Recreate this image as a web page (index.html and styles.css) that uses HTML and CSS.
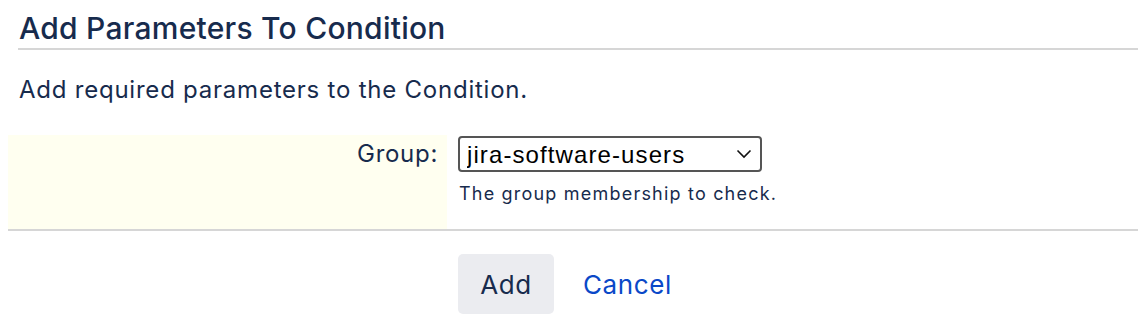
FILE: index.html
```html
<!DOCTYPE html>
<html>
<head>
    <meta charset="UTF-8">
    <title>Add Parameters To Condition</title>
    <link rel="stylesheet" href="styles.css">
</head>
<body>
    <div class="dialog">
        <h2 class="dialog-title">Add Parameters To Condition</h2>
        <p class="dialog-intro">Add required parameters to the Condition.</p>
        <form class="param-form">
            <div class="field-row">
                <label class="field-label" for="group">Group:</label>
                <div class="field-value">
                    <div class="select-wrap">
                        <select id="group" class="field-select">
                            <option>jira-software-users</option>
                        </select>
                        <svg class="select-arrow" width="16" height="10" viewBox="0 0 16 10"><path d="M1.5 1.5 L8 8 L14.5 1.5" fill="none" stroke="#111" stroke-width="1.6"/></svg>
                    </div>
                    <div class="field-desc">The group membership to check.</div>
                </div>
            </div>
            <div class="buttons">
                <button type="button" class="button">Add</button>
                <a href="#" class="cancel">Cancel</a>
            </div>
        </form>
    </div>
</body>
</html>
```

FILE: styles.css
```css
body {
    margin: 0;
    font-family: Inter, "Noto Sans", sans-serif;
    color: #172b4d;
    background: #fff;
}
.dialog {
    padding-left: 8px;
}
.dialog-title {
    margin: 0 0 0 10px;
    padding: 12px 0 4px 1px;
    font-size: 30px;
    font-weight: 500;
    line-height: 32px;
    letter-spacing: 0.25px;
    border-bottom: 2px solid #d6d6d6;
}
.dialog-intro {
    margin: 0;
    padding: 27px 0 0 11px;
    font-size: 24px;
    line-height: 26px;
    letter-spacing: 0.77px;
}
.param-form {
    margin-top: 32px;
}
.field-row {
    display: flex;
    border-bottom: 2px solid #d6d6d6;
}
.field-label {
    width: 439px;
    box-sizing: border-box;
    background: #fffff0;
    text-align: right;
    padding: 6px 9px 0 0;
    height: 94px;
    font-size: 24px;
    line-height: 26px;
    letter-spacing: 0.7px;
}
.field-value {
    padding: 1px 0 0 11px;
}
.select-wrap {
    position: relative;
    width: 304px;
}
.field-select {
    appearance: none;
    -webkit-appearance: none;
    width: 304px;
    height: 36px;
    box-sizing: border-box;
    border: 2px solid #555;
    border-radius: 4px;
    background: #fff;
    font-family: "Liberation Sans", Arial, sans-serif;
    font-size: 24px;
    letter-spacing: 1.1px;
    color: #000;
    padding: 0 0 0 7px;
    outline: none;
}
.select-arrow {
    position: absolute;
    right: 10px;
    top: 13px;
}
.field-desc {
    margin-top: 12px;
    font-size: 18px;
    line-height: 20px;
    letter-spacing: 1.2px;
    padding-left: 1px;
}
.buttons {
    display: flex;
    align-items: center;
    padding: 23px 0 0 450px;
}
.button {
    width: 96px;
    height: 60px;
    border: none;
    border-radius: 5px;
    background: #ebecf0;
    color: #172b4d;
    font-family: Inter, "Noto Sans", sans-serif;
    font-size: 26px;
    letter-spacing: 0.5px;
}
.cancel {
    margin-left: 29px;
    color: #0a48c8;
    text-decoration: none;
    font-size: 26px;
    letter-spacing: 0.6px;
}
```
